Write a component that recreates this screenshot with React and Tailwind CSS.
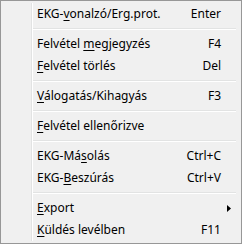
import React from "react";

const items = [
  { label: ["EKG-", "v", "onalzó/Erg.prot."], key: "Enter" },
  "sep",
  { label: ["Felvétel ", "m", "egjegyzés"], key: "F4" },
  { label: ["", "F", "elvétel törlés"], key: "Del" },
  "sep",
  { label: ["", "V", "álogatás/Kihagyás"], key: "F3" },
  "sep",
  { label: ["", "F", "elvétel ellenőrizve"], key: "" },
  "sep",
  { label: ["EKG-Má", "s", "olás"], key: "Ctrl+C" },
  { label: ["EKG-", "B", "eszúrás"], key: "Ctrl+V" },
  "sep",
  { label: ["", "E", "xport"], key: "", submenu: true },
  { label: ["", "K", "üldés levélben"], key: "F11" },
];

const MenuRow = ({ item }) => (
  <div className="h-[22px] flex items-center pl-[4px] pr-[18px] relative">
    <span className="flex-1 whitespace-nowrap">
      {item.label[0]}
      <span className="underline underline-offset-2">{item.label[1]}</span>
      {item.label[2]}
    </span>
    {item.key && <span className="whitespace-nowrap">{item.key}</span>}
    {item.submenu && (
      <svg className="absolute right-[8px] top-[8px]" width="4" height="7" viewBox="0 0 4 7">
        <path d="M0 0 L4 3.5 L0 7 Z" fill="#000" />
      </svg>
    )}
  </div>
);

const App = () => {
  return (
    <div
      className="w-[242px] h-[244px] border border-[#979797] bg-[#f0f0f0] p-[2px] flex text-[12px] text-black leading-none"
      style={{ fontFamily: '"Noto Sans", "Open Sans", sans-serif' }}
    >
      {/* icon gutter */}
      <div className="w-[29px] border-r border-r-[#e2e3e3] shadow-[1px_0_0_#ffffff]" />
      <div className="flex-1 flex flex-col pl-[1px]">
        {items.map((item, i) =>
          item === "sep" ? (
            <div key={i} className="h-[8px] flex flex-col justify-center mr-[3px]">
              <div className="h-[1px] bg-[#e2e3e3]" />
              <div className="h-[1px] bg-white" />
            </div>
          ) : (
            <MenuRow key={i} item={item} />
          )
        )}
      </div>
    </div>
  );
};

export default App;
